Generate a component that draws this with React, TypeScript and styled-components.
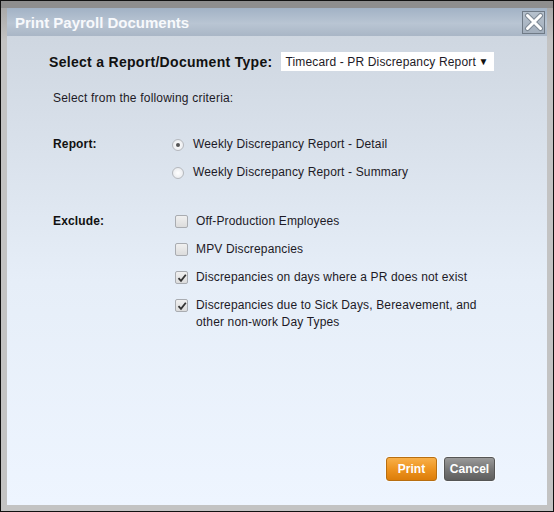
import styled, { createGlobalStyle } from "styled-components";

const GlobalStyle = createGlobalStyle`
  html, body {
    margin: 0;
    padding: 0;
    background: #c3c3c3;
  }
  body {
    font-family: "Liberation Sans", Arial, sans-serif;
  }
`;

const reportOptions = [
  { label: "Weekly Discrepancy Report - Detail", checked: true },
  { label: "Weekly Discrepancy Report - Summary", checked: false },
];

const excludeOptions = [
  { label: "Off-Production Employees", checked: false },
  { label: "MPV Discrepancies", checked: false },
  { label: "Discrepancies on days where a PR does not exist", checked: true },
  {
    label:
      "Discrepancies due to Sick Days, Bereavement, and other non-work Day Types",
    checked: true,
  },
];

const App = () => {
  return (
    <>
      <GlobalStyle />
      <Backdrop>
        <Modal>
          <TitleBar>
            <Title>Print Payroll Documents</Title>
            <CloseButton aria-label="Close">
              <svg width="20" height="20" viewBox="0 0 20 20">
                <path
                  d="M3.5 3.5 L16.5 16.5 M16.5 3.5 L3.5 16.5"
                  stroke="#7d8894"
                  strokeWidth="5"
                  strokeLinecap="round"
                />
                <path
                  d="M3.5 3.5 L16.5 16.5 M16.5 3.5 L3.5 16.5"
                  stroke="#ffffff"
                  strokeWidth="3"
                  strokeLinecap="round"
                />
              </svg>
            </CloseButton>
          </TitleBar>
          <Body>
            <TypeRow>
              <TypeLabel>Select a Report/Document Type:</TypeLabel>
              <SelectBox>
                <span>Timecard - PR Discrepancy Report</span>
                <Arrow>▼</Arrow>
              </SelectBox>
            </TypeRow>
            <Intro>Select from the following criteria:</Intro>
            <Section $top={31}>
              <SectionLabel>Report:</SectionLabel>
              <OptionList>
                {reportOptions.map((o) => (
                  <Option key={o.label}>
                    <Radio $checked={o.checked} />
                    <OptionText>{o.label}</OptionText>
                  </Option>
                ))}
              </OptionList>
            </Section>
            <Section $top={32}>
              <SectionLabel>Exclude:</SectionLabel>
              <OptionList>
                {excludeOptions.map((o) => (
                  <Option key={o.label}>
                    <Checkbox $checked={o.checked}>
                      {o.checked && (
                        <svg width="10" height="10" viewBox="0 0 10 10">
                          <path
                            d="M1.5 5.2 L4 7.8 L8.8 1.8"
                            stroke="#333"
                            strokeWidth="1.8"
                            fill="none"
                          />
                        </svg>
                      )}
                    </Checkbox>
                    <CheckText>{o.label}</CheckText>
                  </Option>
                ))}
              </OptionList>
            </Section>
            <Footer>
              <Button $variant="primary">Print</Button>
              <Button $variant="secondary">Cancel</Button>
            </Footer>
          </Body>
        </Modal>
      </Backdrop>
    </>
  );
};

export default App;

const Backdrop = styled.div`
  box-sizing: border-box;
  width: 554px;
  height: 512px;
  border: 1px solid #111;
  padding: 7px 6px 6px 6px;
  display: flex;
  background: linear-gradient(
    to bottom,
    #8e8e8e 0,
    #8e8e8e 7px,
    #a9a9a9 7px,
    #c3c3c3 40px
  );
`;

const Modal = styled.div`
  flex: 1;
  display: flex;
  flex-direction: column;
  background: linear-gradient(to bottom, #ccd4de 0%, #e6eef8 55%, #eef5ff 100%);
`;

const TitleBar = styled.div`
  height: 28px;
  display: flex;
  align-items: center;
  justify-content: space-between;
  padding: 0 2px 0 8px;
  background: linear-gradient(to bottom, #a2b2c5 0%, #b9c5d3 55%, #a9b6c6 100%);
`;

const Title = styled.h1`
  margin: 0;
  font-size: 15px;
  font-weight: bold;
  color: #f7f9fc;
`;

const CloseButton = styled.div`
  width: 21px;
  height: 21px;
  border: 1px solid #6f7a86;
  background: linear-gradient(to bottom, #b6c1cd, #a3afbd);
  display: flex;
  align-items: center;
  justify-content: center;
`;

const Body = styled.div`
  flex: 1;
  display: flex;
  flex-direction: column;
  padding: 16px 0 24px 39px;
  color: #1d1a26;
  font-size: 12px;
  letter-spacing: 0.15px;
`;

const TypeRow = styled.div`
  display: flex;
  align-items: center;
  gap: 9px;
  padding-left: 3px;
`;

const TypeLabel = styled.span`
  font-size: 14px;
  font-weight: bold;
  letter-spacing: 0.3px;
  color: #111;
`;

const SelectBox = styled.div`
  width: 213px;
  height: 19px;
  box-sizing: border-box;
  background: #fff;
  display: flex;
  align-items: center;
  justify-content: space-between;
  padding: 0 6px 0 4px;
  font-size: 12px;
  color: #1d1a26;
`;

const Arrow = styled.span`
  font-size: 10px;
  color: #111;
`;

const Intro = styled.div`
  margin-top: 20px;
  padding-left: 7px;
  letter-spacing: 0.2px;
`;

const Section = styled.div<{ $top: number }>`
  display: grid;
  grid-template-columns: 119px 1fr;
  margin-top: ${({ $top }) => $top}px;
  padding-left: 7px;
`;

const SectionLabel = styled.div`
  font-weight: bold;
  color: #111;
  line-height: 17px;
`;

const OptionList = styled.div`
  display: flex;
  flex-direction: column;
  gap: 11px;
`;

const Option = styled.div`
  display: flex;
  align-items: flex-start;
  line-height: 17px;
`;

const Radio = styled.span<{ $checked: boolean }>`
  box-sizing: border-box;
  width: 12px;
  height: 12px;
  margin-top: 3px;
  border-radius: 50%;
  border: 1px solid #b5b8bd;
  background: radial-gradient(circle, #ffffff 0%, #e4e6ea 100%);
  display: flex;
  align-items: center;
  justify-content: center;
  flex-shrink: 0;
  margin-right: 9px;
  &::after {
    content: "";
    width: 4px;
    height: 4px;
    border-radius: 50%;
    background: #555;
    display: ${({ $checked }) => ($checked ? "block" : "none")};
  }
`;

const OptionText = styled.span`
  color: #1d1a26;
`;

const Checkbox = styled.span<{ $checked: boolean }>`
  box-sizing: border-box;
  width: 13px;
  height: 13px;
  margin: 2px 8px 0 3px;
  border-radius: 2px;
  border: 1px solid #a9acb1;
  background: linear-gradient(to bottom, #f0f0f0, #dcdcdc);
  display: flex;
  align-items: center;
  justify-content: center;
  flex-shrink: 0;
`;

const CheckText = styled.span`
  max-width: 300px;
  color: #1d1a26;
`;

const Footer = styled.div`
  margin-top: auto;
  display: flex;
  justify-content: flex-end;
  gap: 7px;
  padding-right: 52px;
`;

const Button = styled.div<{ $variant: "primary" | "secondary" }>`
  box-sizing: border-box;
  width: 51px;
  height: 24px;
  border-radius: 3px;
  display: flex;
  align-items: center;
  justify-content: center;
  font-size: 12px;
  font-weight: bold;
  letter-spacing: 0;
  color: #fff;
  border: 1px solid
    ${({ $variant }) => ($variant === "primary" ? "#b86e10" : "#555")};
  background: ${({ $variant }) =>
    $variant === "primary"
      ? "linear-gradient(to bottom, #f8b04a 0%, #ee9420 50%, #dc7d0a 100%)"
      : "linear-gradient(to bottom, #9a9a9a 0%, #777 50%, #5e5e5e 100%)"};
  box-shadow: 0 0 0 1px rgba(255, 255, 255, 0.5);
`;
